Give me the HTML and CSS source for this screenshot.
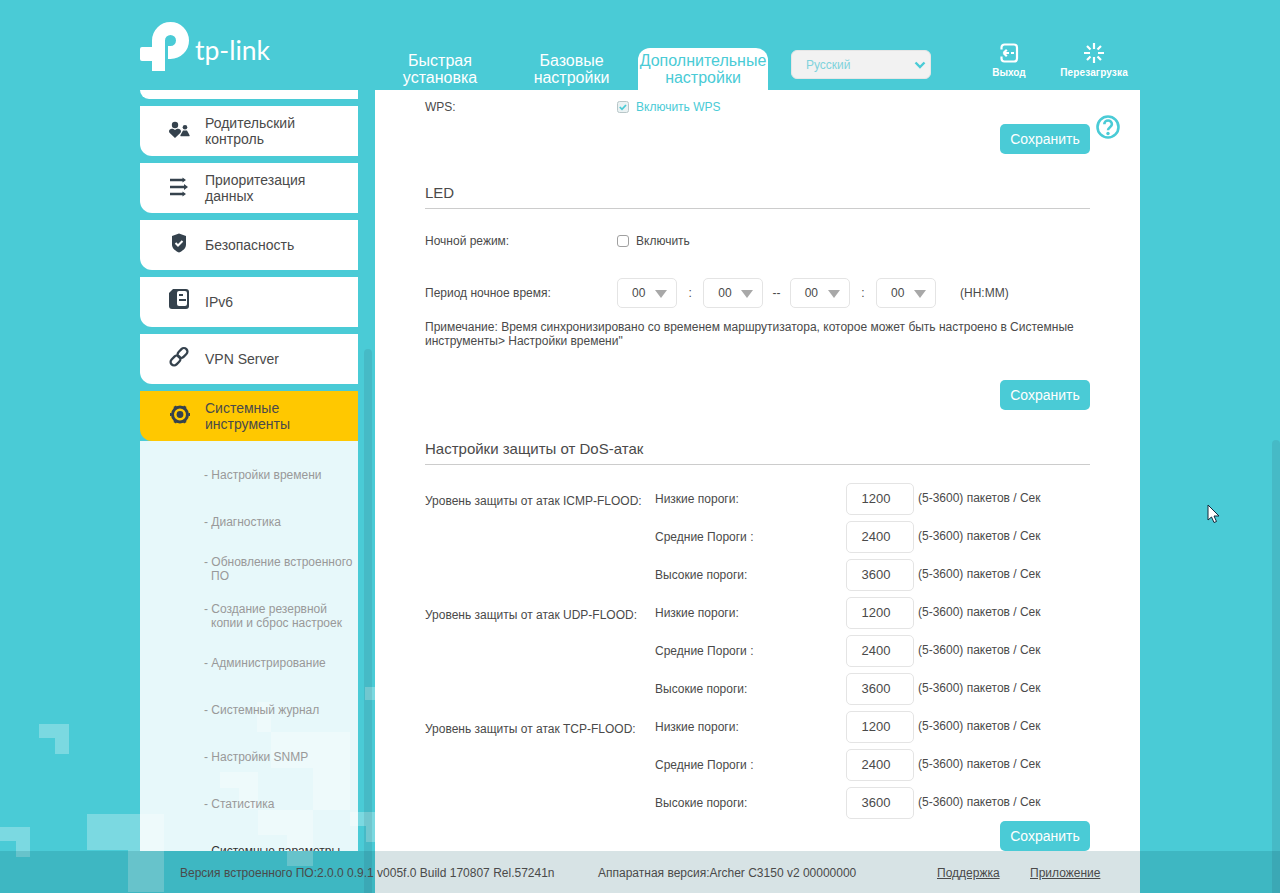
FILE: index.html
```html
<!DOCTYPE html>
<html lang="ru">
<head>
<meta charset="utf-8">
<title>TP-Link Archer C3150</title>
<link rel="stylesheet" href="styles.css">
</head>
<body>
<div class="page">
  <svg class="deco" viewBox="0 0 400 893" width="400" height="893">
    <path d="M39 724h30v30H55V738H39Z"/>
    <path d="M0 827h30v30H16V841H0Z"/>
    <path d="M87 814h77v78H128V850H87Z"/>
    <path d="M257 702h14v30h-14Z"/>
    <path d="M271 732h79v78h-37V768h-42Z"/>
    <path d="M220 772h38v37h-19V788h-19Z"/>
    <path d="M258 810h55v56h-26V835h-29Z"/>
    <path d="M350 812h25v30h-9V826h-16Z"/>
    <path d="M365 687h10v13h-10Z"/>
  </svg>
  <header class="header">
    <div class="logo">
      <svg class="logo-mark" viewBox="0 0 50 50" width="50" height="50">
        <path class="logo-stroke" d="M18.500 49V18.500A12 12 0 1 1 30.500 30.500H28"/>
        <rect class="logo-fill" x="0" y="25" width="22" height="14" rx="2"/>
      </svg>
      <span class="logo-text">tp-link</span>
    </div>
    <nav class="tabs">
      <a class="tab">Быстрая установка</a>
      <a class="tab">Базовые настройки</a>
      <a class="tab tab-active">Дополнительные настройки</a>
    </nav>
    <div class="lang">
      <span>Русский</span>
      <svg viewBox="0 0 12 8" width="12" height="8"><path class="chev" d="M1.500 1.500 6 6l4.500-4.500"/></svg>
    </div>
    <a class="hbtn hbtn-exit">
      <svg viewBox="0 0 20 20" width="20" height="20"><path class="hstroke" d="M2.500 6.500V4.500a3 3 0 0 1 3-3h9.500a3 3 0 0 1 3 3v11a3 3 0 0 1-3 3H5.500a3 3 0 0 1-3-3v-2"/><path class="hstroke" d="M4.500 10h5.500M4.500 10l3.300-3.300M4.500 10l3.300 3.300M12 10h3"/></svg>
      <span>Выход</span>
    </a>
    <a class="hbtn hbtn-reboot">
      <svg viewBox="0 0 22 20" width="22" height="20"><path class="hstroke" d="M11 0v6M11 14v6M1 10h6M15 10h6M4 3l3.500 3.500M18 3l-3.500 3.500M4 17l3.500-3.500M18 17l-3.500-3.500"/></svg>
      <span>Перезагрузка</span>
    </a>
  </header>

  <div class="main">
    <aside class="side">
      <div class="menu-stub"></div>
      <a class="menu-item">
        <svg class="mi" viewBox="0 0 22 22" width="22" height="22"><circle class="ic" cx="7" cy="7" r="3.200"/><path class="ic" d="M7 20 1.500 14.800C-.4 11.800 3.600 8.800 7 12c3.400-3.200 7.400-.2 5.500 2.800Z"/><circle class="ic" cx="17" cy="9.300" r="2.300"/><path class="ic" d="M13 18.300c-.4 0-.8-.4-.6-1l2.600-4.800h4l2.600 4.800c.2.600-.2 1-.6 1Z"/></svg>
        <span>Родительский контроль</span>
      </a>
      <a class="menu-item">
        <svg class="mi" viewBox="0 0 22 22" width="22" height="22"><path class="ic" d="M2 3.700h12.500V2.500L18 5l-3.500 2.500V6.300H2ZM2 10.700h14V9l4 3-4 3v-1.700H2ZM2 17.700h12.500v-1.200L18 19l-3.500 2.500v-1.200H2Z"/></svg>
        <span>Приоритезация данных</span>
      </a>
      <a class="menu-item">
        <svg class="mi" viewBox="0 0 22 22" width="22" height="22"><path class="ic" d="M11 1.500 18 4v8.500c0 4-3.500 6.500-7 8-3.500-1.500-7-4-7-8V4Z"/><path class="ic-cut" d="m7.500 11 2.500 2.500 4.500-4.500"/></svg>
        <span>Безопасность</span>
      </a>
      <a class="menu-item">
        <svg class="mi" viewBox="0 0 22 22" width="22" height="22"><path class="ic" d="M5 0h13a3 3 0 0 1 3 3v14a3 3 0 0 1-3 3H4a3 3 0 0 1-3-3V4Z"/><rect class="ic-white" x="9" y="2" width="10" height="15" rx="2"/><path class="ic" d="M11 5h4v2h-4ZM11 10h7v2h-7Z"/></svg>
        <span>IPv6</span>
      </a>
      <a class="menu-item">
        <svg class="mi" viewBox="0 0 22 22" width="22" height="22"><rect class="link" x="2" y="11" width="11" height="7" rx="3.500" transform="rotate(-45 7.500 14.500)"/><rect class="link" x="9" y="3.500" width="11" height="7" rx="3.500" transform="rotate(-45 14.500 7)"/></svg>
        <span>VPN Server</span>
      </a>
      <a class="menu-item menu-active">
        <svg class="mi" viewBox="0 0 22 22" width="22" height="22"><circle class="gear" cx="12" cy="11.500" r="7.500"/><path class="gear" d="M7.500 4.500 6.700 3.200M16.500 4.500l.8-1.300M7.500 18.500l-.8 1.300M16.500 18.500l.8 1.300M3.500 11.500H2M20.500 11.500H22"/><circle class="ic" cx="12" cy="11.500" r="3.400"/></svg>
        <span>Системные инструменты</span>
      </a>
      <ul class="submenu">
        <li>- Настройки времени</li>
        <li>- Диагностика</li>
        <li class="sub-two">- Обновление встроенного ПО</li>
        <li class="sub-two">- Создание резервной копии и сброс настроек</li>
        <li>- Администрирование</li>
        <li>- Системный журнал</li>
        <li>- Настройки SNMP</li>
        <li>- Статистика</li>
        <li class="sub-current">- Системные параметры</li>
      </ul>
    </aside>
    <div class="side-scroll"></div>

    <section class="content">
      <div class="row row-wps">
        <span class="label">WPS:</span>
        <label class="check check-on">
          <svg class="box" viewBox="0 0 12 12" width="12" height="12"><rect class="box-r" x=".5" y=".5" width="11" height="11" rx="2"/><path class="box-c" d="m2.800 6 2.200 2.300 4-4.300"/></svg>
          Включить WPS
        </label>
      </div>
      <div class="actions actions-1">
        <button class="btn">Сохранить</button>
        <svg class="help" viewBox="0 0 24 24" width="24" height="24"><circle class="help-c" cx="12" cy="12" r="10.500"/><path class="help-q" d="M8.300 9.300c0-5 7.600-5 7.600 0 0 3-3.900 2.800-3.900 6"/><circle class="help-d" cx="12" cy="18.500" r="1.700"/></svg>
      </div>

      <h2 class="title title-led">LED</h2>
      <div class="row row-night">
        <span class="label">Ночной режим:</span>
        <label class="check">
          <svg class="box" viewBox="0 0 12 12" width="12" height="12"><rect class="box-off" x=".5" y=".5" width="11" height="11" rx="2.500"/></svg>
          Включить
        </label>
      </div>
      <div class="row row-period">
        <span class="label">Период ночное время:</span>
        <div class="period">
          <div class="sel"><span>00</span><i class="tri"></i></div>
          <span class="sep">:</span>
          <div class="sel"><span>00</span><i class="tri"></i></div>
          <span class="sep">--</span>
          <div class="sel"><span>00</span><i class="tri"></i></div>
          <span class="sep">:</span>
          <div class="sel"><span>00</span><i class="tri"></i></div>
          <span class="fmt">(HH:MM)</span>
        </div>
      </div>
      <p class="note">Примечание: Время синхронизировано со временем маршрутизатора, которое может быть настроено в Системные инструменты&gt; Настройки времени"</p>
      <div class="actions actions-2"><button class="btn">Сохранить</button></div>

      <h2 class="title title-dos">Настройки защиты от DoS-атак</h2>
      <div class="dos">
        <div class="dos-row"><span class="group">Уровень защиты от атак ICMP-FLOOD:</span><span class="name">Низкие пороги:</span><span class="num">1200</span><span class="unit">(5-3600) пакетов / Сек</span></div>
        <div class="dos-row"><span class="group"></span><span class="name">Средние Пороги :</span><span class="num">2400</span><span class="unit">(5-3600) пакетов / Сек</span></div>
        <div class="dos-row"><span class="group"></span><span class="name">Высокие пороги:</span><span class="num">3600</span><span class="unit">(5-3600) пакетов / Сек</span></div>
        <div class="dos-row"><span class="group">Уровень защиты от атак UDP-FLOOD:</span><span class="name">Низкие пороги:</span><span class="num">1200</span><span class="unit">(5-3600) пакетов / Сек</span></div>
        <div class="dos-row"><span class="group"></span><span class="name">Средние Пороги :</span><span class="num">2400</span><span class="unit">(5-3600) пакетов / Сек</span></div>
        <div class="dos-row"><span class="group"></span><span class="name">Высокие пороги:</span><span class="num">3600</span><span class="unit">(5-3600) пакетов / Сек</span></div>
        <div class="dos-row"><span class="group">Уровень защиты от атак TCP-FLOOD:</span><span class="name">Низкие пороги:</span><span class="num">1200</span><span class="unit">(5-3600) пакетов / Сек</span></div>
        <div class="dos-row"><span class="group"></span><span class="name">Средние Пороги :</span><span class="num">2400</span><span class="unit">(5-3600) пакетов / Сек</span></div>
        <div class="dos-row"><span class="group"></span><span class="name">Высокие пороги:</span><span class="num">3600</span><span class="unit">(5-3600) пакетов / Сек</span></div>
      </div>
      <div class="actions actions-3"><button class="btn">Сохранить</button></div>
    </section>
  </div>

  <div class="page-scroll"></div>
  <svg class="cursor" viewBox="0 0 14 20" width="14" height="20"><path class="cursor-p" d="M1 1v15l3.500-3 2.500 5.500 2.500-1-2.500-5.500H12Z"/></svg>

  <footer class="footer">
    <span class="fw">Версия встроенного ПО:2.0.0 0.9.1 v005f.0 Build 170807 Rel.57241n</span>
    <span class="hw">Аппаратная версия:Archer C3150 v2 00000000</span>
    <a class="flink flink-1">Поддержка</a>
    <a class="flink flink-2">Приложение</a>
  </footer>
</div>
</body>
</html>
```
FILE: styles.css
```css
* { box-sizing: border-box; }
html, body { margin: 0; height: 100%; overflow: hidden; }
body { background: #4acbd6; font-family: "Liberation Sans", Arial, sans-serif; font-size: 12px; color: #4a4a4a; }
.page { position: relative; height: 893px; overflow: hidden; }

/* header */
.header { display: flex; height: 90px; width: 1000px; margin: 0 auto; position: relative; }
.logo { width: 235px; display: flex; padding-top: 22px; }
.logo-mark { flex: none; }
.logo-stroke { fill: none; stroke: #fff; stroke-width: 13; }
.logo-fill { fill: #fff; }
.logo-text { font-family: Lato, sans-serif; font-weight: 400; font-size: 26.500px; color: #fff; margin: 11px 0 0 5px; line-height: 34px; }
.tabs { display: flex; gap: 1.5px; align-items: flex-end; }
.tab { width: 130px; height: 42px; font-size: 16px; line-height: 17px; color: #fff; text-align: center; padding-top: 4px; border-radius: 12px 12px 0 0; }
.tab-active { background: #fff; color: #4acbd6; }
.lang { width: 140px; height: 29px; margin: 50px 0 0 23px; background: #f2f2f2; border: 1px solid #e6e6e6; border-radius: 6px; color: #7fd3dc; font-size: 12px; display: flex; align-items: center; justify-content: space-between; padding: 0 4px 0 14px; }
.chev { fill: none; stroke: #4acbd6; stroke-width: 2.400; }
.hbtn { display: flex; flex-direction: column; align-items: center; color: #fff; font-size: 10px; font-weight: bold; position: absolute; top: 43px; }
.hbtn span { margin-top: 3px; line-height: 14px; white-space: nowrap; }
.hbtn-exit { left: 852px; width: 34px; }
.hbtn-reboot { left: 919px; width: 70px; }
.hbtn-reboot span { letter-spacing: 0.15px; }
.hstroke { fill: none; stroke: #fff; stroke-width: 2.200; }

/* main */
.main { display: flex; width: 1000px; height: 803px; margin: 0 auto; position: relative; }
.side { width: 218px; height: 761px; flex: none; overflow: hidden; }
.menu-stub { height: 9px; background: #fff; border-radius: 0 0 0 12px; margin-bottom: 7px; }
.menu-item { display: flex; height: 50px; margin-bottom: 7px; background: #fff; border-radius: 0 0 0 12px; padding-left: 28px; font-size: 14px; line-height: 16px; color: #4a4a4a; }
.menu-item span { align-self: center; margin-left: 15px; width: 130px; }
.mi { margin-top: 12px; flex: none; }
.menu-active { background: #ffc800; margin-bottom: 0; }
.ic { fill: #35424d; stroke: none; }
.ic-white { fill: #fff; }
.ic-cut { fill: none; stroke: #fff; stroke-width: 2; }
.link { fill: none; stroke: #35424d; stroke-width: 2.300; }
.gear { fill: none; stroke: #35424d; stroke-width: 3; }
.submenu { list-style: none; margin: 0; padding: 10px 0 0; background: rgba(255, 255, 255, 0.87); height: 420px; color: #999; }
.submenu li { height: 47px; padding: 17px 2px 0 71px; text-indent: -7px; line-height: 14px; }
.submenu .sub-two { padding-top: 10px; }
.submenu .sub-current { color: #333; }
.side-scroll { position: absolute; left: 224px; top: 259px; width: 8px; height: 544px; background: rgba(50, 80, 90, 0.13); border-radius: 4px 4px 0 0; }
.content { margin-left: 17px; width: 765px; background: #fff; padding: 0 50px; position: relative; overflow: hidden; }

.row { display: flex; }
.label { width: 192px; flex: none; }
.row-wps { padding-top: 10px; line-height: 14px; }
.check { display: flex; align-items: center; gap: 7px; line-height: 14px; }
.check-on { color: #4acbd6; }
.box-r { fill: #eaf2f3; stroke: #b8c6c8; }
.box-c { fill: none; stroke: #4acbd6; stroke-width: 1.800; }
.box-off { fill: #fff; stroke: #a0a0a0; }
.actions { display: flex; justify-content: flex-end; position: relative; }
.actions-1 { margin-top: 10px; }
.actions-2 { margin-top: 32px; }
.actions-3 { margin-top: -4px; }
.btn { width: 90px; height: 30px; background: #4acbd6; color: #fff; border: 0; border-radius: 5px; font: 14px "Liberation Sans", Arial, sans-serif; padding: 0; }
.help { position: absolute; right: -30px; top: -9px; }
.help-c, .help-q { fill: none; stroke: #4acbd6; stroke-width: 2.600; }
.help-d { fill: #4acbd6; }
.title { margin: 0; font-weight: normal; font-size: 15px; line-height: 17px; padding-bottom: 7px; border-bottom: 1px solid #ccc; }
.title-led { margin-top: 30px; }
.row-night { margin-top: 25px; line-height: 14px; align-items: center; }
.row-period { margin-top: 30px; align-items: center; }
.period { display: flex; align-items: center; }
.sel { width: 60px; height: 30px; border: 1px solid #e4e4e4; border-radius: 5px; display: flex; align-items: center; padding-left: 14px; position: relative; }
.tri { position: absolute; right: 9px; top: 11px; border: 6px solid transparent; border-top: 8px solid #a8a8a8; border-bottom: 0; }
.sep { width: 26.33px; text-align: center; }
.fmt { margin-left: 24px; }
.note { margin: 12px 0 0; line-height: 14px; width: 665px; }
.title-dos { margin-top: 30px; }
.dos { margin-top: 18px; }
.dos-row { display: grid; grid-template-columns: 230px 191px 68px 1fr; height: 38px; }
.group { padding-top: 11px; line-height: 14px; white-space: nowrap; }
.name { padding-top: 9px; line-height: 14px; }
.num { width: 68px; height: 32px; border: 1px solid #e4e4e4; border-radius: 5px; text-align: center; font-size: 13px; line-height: 30px; padding-right: 8px; }
.unit { padding: 8px 0 0 4px; line-height: 14px; white-space: nowrap; }

/* overlays */
.deco { position: absolute; left: 0; top: 0; pointer-events: none; fill: rgba(255, 255, 255, 0.27); }
.page-scroll { position: absolute; right: 0; top: 440px; width: 8px; height: 453px; background: rgba(50, 80, 90, 0.13); border-radius: 4px 4px 0 0; }
.cursor { position: absolute; left: 1207px; top: 504px; }
.cursor-p { fill: #fff; stroke: #12283a; stroke-width: 1; }
.footer { position: absolute; left: 0; right: 0; bottom: 0; height: 42px; background: rgba(0, 74, 87, 0.155); line-height: 44px; color: #4a4a4a; }
.footer span, .footer a { position: absolute; top: 0; white-space: nowrap; }
.fw { left: 180px; }
.hw { left: 598px; }
.flink { text-decoration: underline; }
.flink-1 { left: 937px; }
.flink-2 { left: 1030px; }
```
